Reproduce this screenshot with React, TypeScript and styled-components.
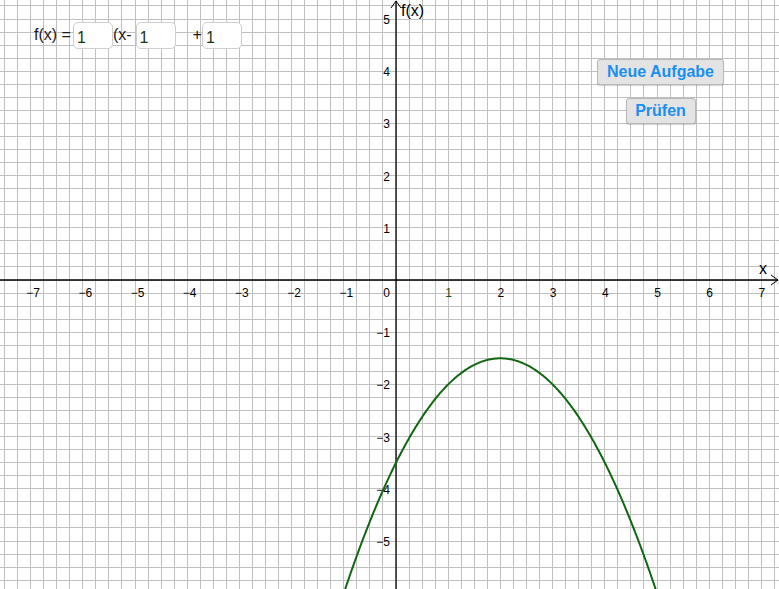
import styled, { createGlobalStyle } from "styled-components";

const W = 779;
const H = 589;
const ORIGIN_X = 396;
const ORIGIN_Y = 280;
const UNIT = 52.2;
const STEP = UNIT / 4;

const GlobalStyle = createGlobalStyle`
  html, body {
    margin: 0;
    padding: 0;
    background: #ffffff;
    overflow: hidden;
  }
  body {
    font-family: "Liberation Sans", Arial, sans-serif;
  }
`;

const Applet = styled.div`
  position: relative;
  width: ${W}px;
  height: ${H}px;
  overflow: hidden;
  background: #ffffff;
`;

const Canvas = styled.svg`
  display: block;
`;

const FormulaRow = styled.div`
  position: absolute;
  left: 34px;
  top: 22px;
  display: flex;
  align-items: center;
  height: 26px;
  font-size: 16px;
  color: #1a1a1a;
`;

const Sign = styled.span<{ $before?: number; $after?: number }>`
  margin-left: ${({ $before }) => $before ?? 0}px;
  margin-right: ${({ $after }) => $after ?? 2}px;
  white-space: pre;
`;

const Coefficient = styled.input`
  box-sizing: border-box;
  width: 40px;
  height: 27px;
  margin: 0;
  padding: 6px 0 0 3px;
  border: 1px solid #cfcfcf;
  border-radius: 5px;
  background: #ffffff;
  font-family: "Liberation Sans", Arial, sans-serif;
  font-size: 16px;
  color: #163616;
  outline: none;
`;

const ButtonStack = styled.div`
  position: absolute;
  left: 597px;
  top: 59px;
  width: 127px;
  display: flex;
  flex-direction: column;
  align-items: center;
  gap: 13px;
`;

const ActionButton = styled.button<{ $width: number }>`
  box-sizing: border-box;
  width: ${({ $width }) => $width}px;
  height: 26px;
  margin: 0;
  padding: 0;
  border: 1px solid #b8b8b8;
  border-radius: 3px;
  background: #e3e3e3;
  box-shadow: 0 1px 1px rgba(0, 0, 0, 0.18);
  color: #1a8ff0;
  font-family: "Liberation Sans", Arial, sans-serif;
  font-weight: bold;
  font-size: 16px;
  cursor: pointer;
`;

const parabola = (x: number) => -0.5 * (x - 2) ** 2 - 1.5;

const toPx = (x: number) => ORIGIN_X + x * UNIT;
const toPy = (y: number) => ORIGIN_Y - y * UNIT;

function gridLines() {
  const lines: JSX.Element[] = [];
  for (let k = -40; k <= 40; k++) {
    const x = ORIGIN_X + k * STEP;
    if (x >= 0 && x <= W) {
      lines.push(
        <line key={`v${k}`} x1={x} y1={0} x2={x} y2={H} stroke="#c0c0c0" strokeWidth={1} />
      );
    }
    const y = ORIGIN_Y + k * STEP;
    if (y >= 0 && y <= H) {
      lines.push(
        <line key={`h${k}`} x1={0} y1={y} x2={W} y2={y} stroke="#c0c0c0" strokeWidth={1} />
      );
    }
  }
  return lines;
}

function curvePath() {
  const pts: string[] = [];
  for (let x = -1.2; x <= 5.2; x += 0.02) {
    pts.push(`${toPx(x).toFixed(2)},${toPy(parabola(x)).toFixed(2)}`);
  }
  return "M" + pts.join(" L");
}

const fmt = (n: number) => (n < 0 ? `\u2212${-n}` : `${n}`);

export default function App() {
  const xTicks = [-7, -6, -5, -4, -3, -2, -1, 1, 2, 3, 4, 5, 6, 7];
  const yTicks = [5, 4, 3, 2, 1, -1, -2, -3, -4, -5];

  return (
    <Applet>
      <GlobalStyle />
      <Canvas width={W} height={H} viewBox={`0 0 ${W} ${H}`}>
        <g shapeRendering="crispEdges">{gridLines()}</g>

        {/* axes */}
        <line x1={0} y1={ORIGIN_Y} x2={W - 1} y2={ORIGIN_Y} stroke="#000" strokeWidth={1.3} />
        <line x1={ORIGIN_X} y1={1} x2={ORIGIN_X} y2={H} stroke="#000" strokeWidth={1.3} />
        <polyline
          points={`${W - 8},${ORIGIN_Y - 5} ${W - 1},${ORIGIN_Y} ${W - 8},${ORIGIN_Y + 5}`}
          fill="none"
          stroke="#000"
          strokeWidth={1}
        />
        <polyline
          points={`${ORIGIN_X - 5},8 ${ORIGIN_X},1 ${ORIGIN_X + 5},8`}
          fill="none"
          stroke="#000"
          strokeWidth={1}
        />

        <g fontFamily="Liberation Sans, Arial, sans-serif" fontSize={12} fill="#000">
          {xTicks.map((n) => (
            <text
              key={`x${n}`}
              x={toPx(n) + (n < 0 ? 2.5 : 0.5)}
              y={ORIGIN_Y + 17}
              textAnchor="middle"
              fill={n === 1 ? "#1f4f1f" : "#000"}
            >
              {fmt(n)}
            </text>
          ))}
          <text x={ORIGIN_X - 6} y={ORIGIN_Y + 17} textAnchor="end">
            0
          </text>
          {yTicks.map((n) => (
            <text key={`y${n}`} x={ORIGIN_X - 6} y={toPy(n) + 5} textAnchor="end">
              {fmt(n)}
            </text>
          ))}
        </g>

        <g fontFamily="Liberation Sans, Arial, sans-serif" fontSize={16} fill="#000">
          <text x={401} y={16}>
            f(x)
          </text>
          <text x={759} y={274}>
            x
          </text>
        </g>

        <path d={curvePath()} fill="none" stroke="#116611" strokeWidth={2} />
      </Canvas>

      <FormulaRow>
        <Sign>f(x) =</Sign>
        <Coefficient readOnly defaultValue="1" />
        <Sign $after={4}>(x-</Sign>
        <Coefficient readOnly defaultValue="1" />
        <Sign $before={17} $after={0}>+</Sign>
        <Coefficient readOnly defaultValue="1" />
      </FormulaRow>

      <ButtonStack>
        <ActionButton $width={127}>Neue Aufgabe</ActionButton>
        <ActionButton $width={70}>Prüfen</ActionButton>
      </ButtonStack>
    </Applet>
  );
}
